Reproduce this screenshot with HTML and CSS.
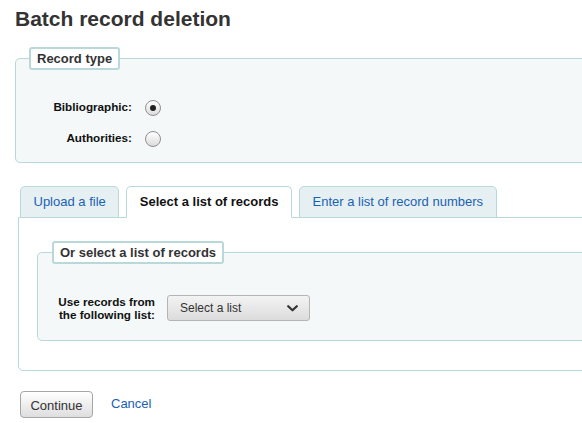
FILE: index.html
```html
<!DOCTYPE html>
<html lang="en">
<head>
<meta charset="utf-8">
<title>Batch record deletion</title>
<link rel="stylesheet" href="styles.css">
</head>
<body>
<div class="page">
  <h1 class="title">Batch record deletion</h1>
  <form class="form">
    <fieldset class="box">
      <legend class="legend">Record type</legend>
      <div class="rows">
        <div class="row">
          <label class="label" for="rt-bib">Bibliographic:</label>
          <input class="radio" type="radio" id="rt-bib" name="rt" checked>
        </div>
        <div class="row">
          <label class="label" for="rt-auth">Authorities:</label>
          <input class="radio" type="radio" id="rt-auth" name="rt">
        </div>
      </div>
    </fieldset>

    <div class="tabs">
      <ul class="tablist">
        <li class="tab"><a class="tablink" href="#">Upload a file</a></li>
        <li class="tab active"><a class="tablink" href="#">Select a list of records</a></li>
        <li class="tab"><a class="tablink" href="#">Enter a list of record numbers</a></li>
      </ul>
      <div class="panel">
        <fieldset class="box inner">
          <legend class="legend">Or select a list of records</legend>
          <div class="row listrow">
            <label class="label" for="list">Use records from the following list:</label>
            <button type="button" class="select" id="list">
              <span class="select-text">Select a list</span>
              <svg class="chev" width="11" height="7" viewBox="0 0 11 7"><polyline points="1.2,1.2 5.5,5.3 9.8,1.2" fill="none" stroke="#333" stroke-width="2.2" stroke-linecap="round" stroke-linejoin="round"/></svg>
            </button>
          </div>
        </fieldset>
      </div>
    </div>

    <div class="actions">
      <button type="button" class="btn">Continue</button>
      <a class="cancel" href="#">Cancel</a>
    </div>
  </form>
</div>
</body>
</html>
```

FILE: styles.css
```css
html, body {
  margin: 0;
  padding: 0;
  overflow: hidden;
  background: #fff;
}
body {
  font-family: "Liberation Sans", Arial, sans-serif;
  font-size: 13px;
  color: #333;
}
.page {
  width: 720px;
  padding: 7px 0 0 15px;
}
.title {
  margin: 0 0 17px;
  font-size: 21px;
  line-height: 23px;
  font-weight: bold;
  color: #333;
}
.form {
  margin: 0;
}
.box {
  margin: 0;
  padding: 21px 13px 9px;
  border: 1px solid #b9d8d9;
  border-radius: 5px;
  background: #f4f8f9;
  min-width: 0;
}
.legend {
  padding: 2px 6px;
  line-height: 15px;
  font-size: 13px;
  font-weight: bold;
  color: #333;
  background: #fff;
  border: 2px solid #b9d8d9;
  border-radius: 3px;
}
.rows {
  display: flex;
  flex-direction: column;
}
.row {
  display: flex;
  align-items: center;
  height: 31px;
}
.label {
  width: 103px;
  margin-right: 13px;
  text-align: right;
  font-size: 11.7px;
  line-height: 13.5px;
  font-weight: bold;
  color: #111;
}
.radio {
  appearance: none;
  -webkit-appearance: none;
  box-sizing: border-box;
  width: 16px;
  height: 16px;
  margin: 3px 0 0;
  border: 1px solid #8f8f8f;
  border-radius: 50%;
  background: linear-gradient(#ffffff, #dcdcdc);
  display: flex;
  align-items: center;
  justify-content: center;
}
.radio:checked::after {
  content: "";
  width: 6px;
  height: 6px;
  border-radius: 50%;
  background: #222;
}
.tabs {
  margin: 23px 0 0 3px;
}
.tablist {
  list-style: none;
  margin: 0;
  padding: 0 0 0 2px;
  display: flex;
  gap: 7px;
}
.tab {
  position: relative;
  z-index: 1;
  margin-bottom: -1px;
  border: 1px solid #b9d8d9;
  border-radius: 5px 5px 0 0;
  background: #e6f0f2;
}
.tab.active {
  background: #fff;
  border-bottom-color: #fff;
}
.tablink {
  display: block;
  padding: 7px 12.5px 8px;
  line-height: 15px;
  font-size: 13px;
  color: #1b61b3;
  text-decoration: none;
}
.tab.active .tablink {
  font-weight: bold;
  color: #111;
}
.panel {
  border: 1px solid #b9d8d9;
  border-radius: 0 0 0 5px;
  padding: 23px 0 29px 18px;
  background: #fff;
}
.inner {
  padding: 31px 14px 19px;
}
.listrow {
  height: 26px;
}
.label + .select {
  margin-left: -1px;
}
.select {
  box-sizing: border-box;
  width: 143px;
  height: 26px;
  margin: 0;
  padding: 0 11px 0 12px;
  display: flex;
  align-items: center;
  justify-content: space-between;
  border: 1px solid #b5b5b5;
  border-radius: 3px;
  background: linear-gradient(#f3f3f3, #dcdcdc);
  font-family: "Liberation Sans", Arial, sans-serif;
  font-size: 12px;
  color: #333;
}
.chev {
  display: block;
}
.actions {
  display: flex;
  align-items: center;
  gap: 18px;
  margin: 20px 0 0 5px;
}
.btn {
  box-sizing: border-box;
  height: 27px;
  width: 73px;
  padding: 2px 0 0;
  border: 1px solid #a6a6a6;
  border-radius: 4px;
  background: linear-gradient(#ffffff, #dedede);
  font-family: "Liberation Sans", Arial, sans-serif;
  font-size: 13px;
  color: #333;
}
.cancel {
  font-size: 13px;
  color: #1b61b3;
  text-decoration: none;
  margin-top: -3px;
}
```
